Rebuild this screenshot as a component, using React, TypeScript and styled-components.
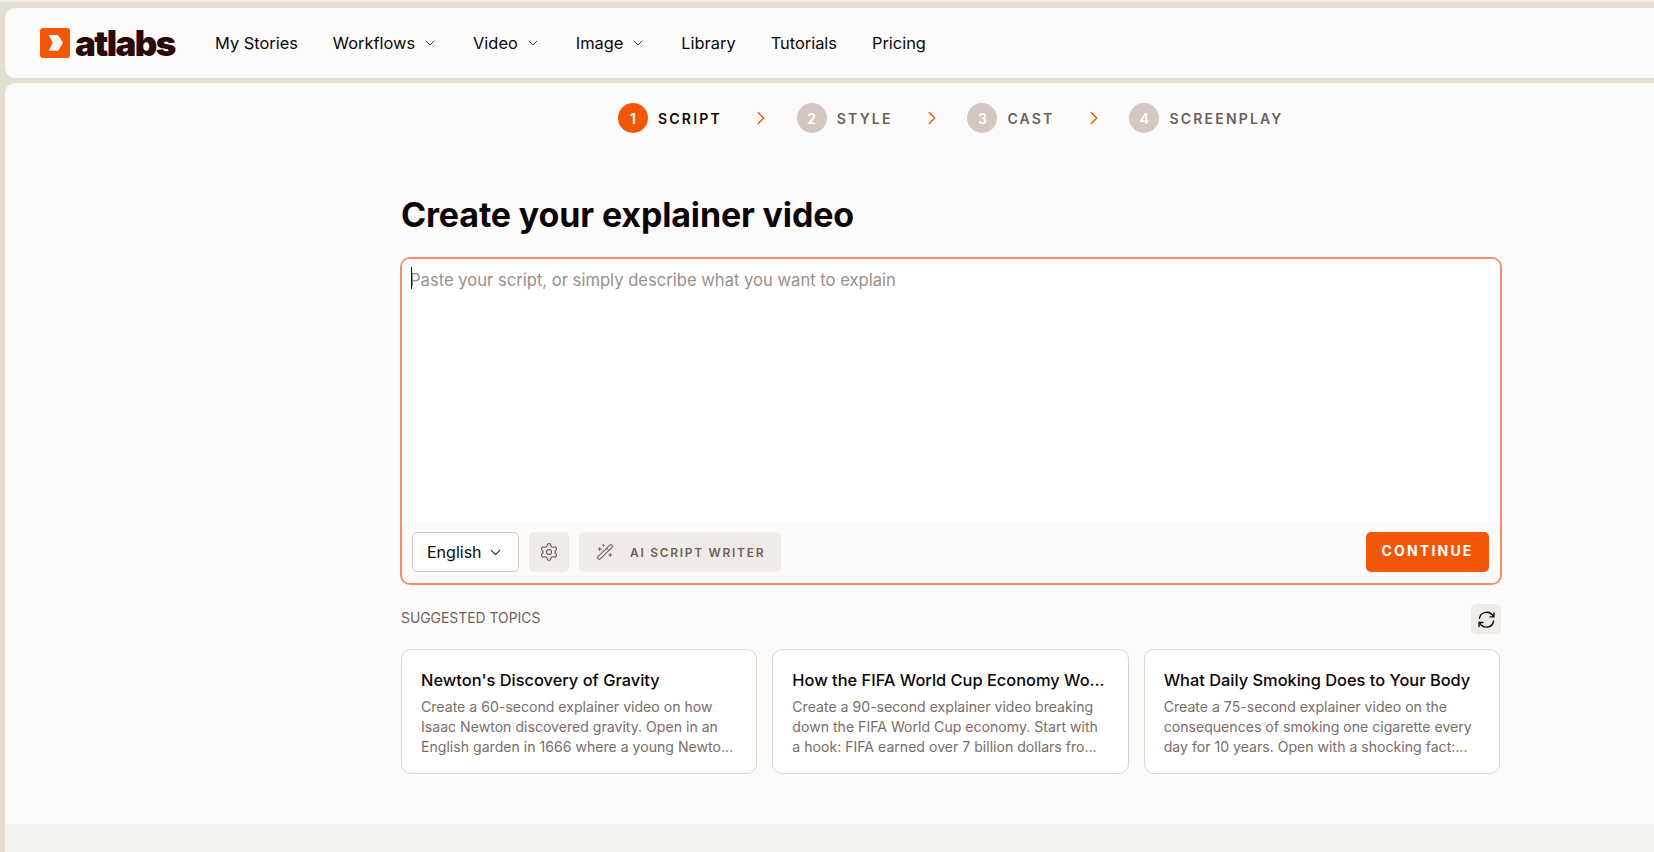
import styled, { createGlobalStyle } from 'styled-components';
import { ChevronDown, ChevronRight, Settings, WandSparkles } from 'lucide-react';

const GlobalStyle = createGlobalStyle`
  * { box-sizing: border-box; }
  html, body { margin: 0; height: 100%; overflow: hidden; }
  body { background: #e3ddd2; font-family: Inter, sans-serif; color: #0c0606; }
`;

const navItems = [
  { label: 'My Stories' },
  { label: 'Workflows', menu: true },
  { label: 'Video', menu: true },
  { label: 'Image', menu: true },
  { label: 'Library' },
  { label: 'Tutorials' },
  { label: 'Pricing' },
];

const steps = ['SCRIPT', 'STYLE', 'CAST', 'SCREENPLAY'];

const topics = [
  {
    title: "Newton's Discovery of Gravity",
    body: 'Create a 60-second explainer video on how Isaac Newton discovered gravity. Open in an English garden in 1666 where a young Newto...',
  },
  {
    title: 'How the FIFA World Cup Economy Wo...',
    body: 'Create a 90-second explainer video breaking down the FIFA World Cup economy. Start with a hook: FIFA earned over 7 billion dollars fro...',
  },
  {
    title: 'What Daily Smoking Does to Your Body',
    body: 'Create a 75-second explainer video on the consequences of smoking one cigarette every day for 10 years. Open with a shocking fact:...',
  },
];

const App = () => {
  return (
    <>
      <GlobalStyle />
      <Page>
        <TopStrip />
        <Shell>
          <NavBar>
            <Logo>
              <svg width="30" height="30" viewBox="0 0 30 30">
                <rect width="30" height="30" rx="3" fill="#f25708" />
                <path d="M8.7 7H18L23 14.7 18 22.7H8.7L12.7 14.7Z" fill="#fdf6f0" />
              </svg>
              <LogoText>atlabs</LogoText>
            </Logo>
            <NavList>
              {navItems.map((item) => (
                <NavItem key={item.label}>
                  {item.label}
                  {item.menu && <ChevronDown size={16} strokeWidth={1.5} color="#4a3f3c" />}
                </NavItem>
              ))}
            </NavList>
          </NavBar>
          <Main>
            <Stepper>
              {steps.map((step, i) => (
                <Step key={step}>
                  <StepNumber $active={i === 0}>{i + 1}</StepNumber>
                  <StepLabel $active={i === 0}>{step}</StepLabel>
                  {i < steps.length - 1 && (
                    <StepArrow>
                      <ChevronRight size={22} strokeWidth={1.5} color="#f25708" />
                    </StepArrow>
                  )}
                </Step>
              ))}
            </Stepper>
            <Content>
              <Title>Create your explainer video</Title>
              <Composer>
                <Caret />
                <ScriptInput placeholder="Paste your script, or simply describe what you want to explain" />
                <Toolbar>
                  <LanguageSelect>
                    English
                    <ChevronDown size={17} strokeWidth={1.5} color="#2a1d1a" />
                  </LanguageSelect>
                  <IconButton $size={40}>
                    <Settings size={20} strokeWidth={1.4} color="#6f5f5a" />
                  </IconButton>
                  <WriterButton>
                    <WandSparkles size={18} strokeWidth={1.4} color="#6f5f5a" />
                    AI SCRIPT WRITER
                  </WriterButton>
                  <ContinueButton>CONTINUE</ContinueButton>
                </Toolbar>
              </Composer>
              <TopicsHeader>
                <TopicsLabel>SUGGESTED TOPICS</TopicsLabel>
                <IconButton $size={30}>
                  <svg
                    width="21"
                    height="21"
                    viewBox="0 0 24 24"
                    fill="none"
                    stroke="#0c0606"
                    strokeWidth="1.6"
                    strokeLinecap="round"
                    strokeLinejoin="round"
                  >
                    <path d="M4 10.5A8.2 8.2 0 0 1 19.5 8.5" />
                    <path d="M20.5 4.5V9H16" />
                    <path d="M20 14A8.2 8.2 0 0 1 4.5 16" />
                    <path d="M3.5 20V15.5H8" />
                  </svg>
                </IconButton>
              </TopicsHeader>
              <TopicGrid>
                {topics.map((topic) => (
                  <TopicCard key={topic.title}>
                    <TopicTitle>{topic.title}</TopicTitle>
                    <TopicBody>{topic.body}</TopicBody>
                  </TopicCard>
                ))}
              </TopicGrid>
            </Content>
            <Footer />
          </Main>
        </Shell>
      </Page>
    </>
  );
};

const Page = styled.div`
  height: 852px;
  overflow: hidden;
`;

const TopStrip = styled.div`
  height: 2px;
  background: #eceae6;
`;

const Shell = styled.div`
  padding: 6px 0 0 5px;
  display: flex;
  flex-direction: column;
  gap: 5px;
`;

const NavBar = styled.header`
  height: 70px;
  background: #fcfbf9;
  border-radius: 10px 0 0 10px;
  display: flex;
  align-items: center;
  padding-left: 35px;
`;

const Logo = styled.div`
  display: flex;
  align-items: center;
  gap: 5px;
  width: 175px;
`;

const LogoText = styled.span`
  font-family: Inter, sans-serif;
  font-weight: 900;
  font-size: 35px;
  line-height: 30px;
  letter-spacing: -1.6px;
  color: #2b0a0a;
`;

const NavList = styled.nav`
  display: flex;
  align-items: center;
  gap: 35px;
`;

const NavItem = styled.div`
  display: flex;
  align-items: center;
  gap: 7px;
  font-size: 16.4px;
  color: #0c0606;
`;

const Main = styled.main`
  height: 769px;
  background: #fcfbf9;
  border-radius: 10px 0 0 0;
  display: flex;
  flex-direction: column;
`;

const Stepper = styled.div`
  height: 70px;
  padding-left: 613px;
  display: flex;
  align-items: center;
`;

const Step = styled.div`
  display: flex;
  align-items: center;
`;

const StepNumber = styled.span<{ $active: boolean }>`
  width: 30px;
  height: 30px;
  border-radius: 50%;
  background: ${(p) => (p.$active ? '#f25708' : '#d2c8c1')};
  color: #fff;
  font-size: 14px;
  font-weight: 600;
  display: flex;
  align-items: center;
  justify-content: center;
`;

const StepLabel = styled.span<{ $active: boolean }>`
  margin-left: 10px;
  font-size: 14px;
  font-weight: 600;
  letter-spacing: 2.2px;
  color: ${(p) => (p.$active ? '#0c0606' : '#6f5f5a')};
`;

const StepArrow = styled.span`
  display: flex;
  margin: 0 24.8px 0 28px;
`;

const Content = styled.section`
  width: 1100px;
  margin-left: 396px;
  flex: 1;
`;

const Title = styled.h1`
  margin: 41px 0 0;
  font-size: 34px;
  line-height: 42px;
  font-weight: 700;
  letter-spacing: -0.15px;
  color: #0c0606;
`;

const Composer = styled.div`
  position: relative;
  margin: 21px -1px 0;
  height: 328px;
  border: 2px solid #f58d68;
  border-radius: 10px;
  overflow: hidden;
  display: flex;
  flex-direction: column;
`;

const Caret = styled.span`
  position: absolute;
  left: 9px;
  top: 8px;
  width: 1px;
  height: 22px;
  background: #0c0606;
`;

const ScriptInput = styled.textarea`
  flex: 1;
  border: none;
  outline: none;
  resize: none;
  background: #fff;
  padding: 11px 8px;
  font-family: Inter, sans-serif;
  font-size: 16.6px;
  line-height: 20px;

  &::placeholder {
    color: #9a8f8b;
    opacity: 1;
  }
`;

const Toolbar = styled.div`
  height: 61px;
  background: #fbfaf8;
  display: flex;
  align-items: flex-start;
  gap: 10px;
  padding: 10px 11px 0 10px;
`;

const LanguageSelect = styled.div`
  width: 107px;
  height: 40px;
  background: #fff;
  border: 1px solid #d2c8c1;
  border-radius: 5px;
  display: flex;
  align-items: center;
  justify-content: space-between;
  padding: 0 14px;
  font-size: 16px;
  color: #0c0606;
`;

const IconButton = styled.button<{ $size: number }>`
  width: ${(p) => p.$size}px;
  height: ${(p) => p.$size}px;
  padding: 0;
  border: none;
  border-radius: 5px;
  background: #f0ebe8;
  display: flex;
  align-items: center;
  justify-content: center;
`;

const WriterButton = styled.button`
  width: 202px;
  height: 40px;
  border: none;
  border-radius: 5px;
  background: #f0ebe8;
  display: flex;
  align-items: center;
  gap: 16px;
  padding: 0 16px 0 17px;
  font-family: Inter, sans-serif;
  font-size: 12px;
  font-weight: 600;
  letter-spacing: 1.7px;
  white-space: nowrap;
  color: #6f5f5a;

  svg {
    flex-shrink: 0;
  }
`;

const ContinueButton = styled.button`
  margin-left: auto;
  width: 123px;
  height: 40px;
  border: none;
  border-radius: 5px;
  padding: 0 0 3px;
  background: #f25708;
  color: #fff;
  font-family: Inter, sans-serif;
  font-size: 14px;
  font-weight: 700;
  letter-spacing: 2.2px;
`;

const TopicsHeader = styled.div`
  margin-top: 19px;
  display: flex;
  align-items: center;
  justify-content: space-between;
`;

const TopicsLabel = styled.span`
  margin-bottom: 2px;
  font-size: 13.9px;
  color: #6f5f5a;
`;

const TopicGrid = styled.div`
  margin: 15px 1px 0 0;
  display: grid;
  grid-template-columns: repeat(3, 1fr);
  gap: 15px;
`;

const TopicCard = styled.article`
  height: 125px;
  background: #fff;
  border: 1px solid #dcd6cf;
  border-radius: 10px;
  padding: 20px 19px;
`;

const TopicTitle = styled.h3`
  margin: 0;
  font-size: 16.4px;
  line-height: 20px;
  font-weight: 500;
  color: #0c0606;
  white-space: nowrap;
`;

const TopicBody = styled.p`
  margin: 7px 0 0;
  font-size: 14.1px;
  line-height: 20px;
  color: #7a6d69;
`;

const Footer = styled.div`
  height: 28px;
  background: #f3f1ec;
`;

export default App;
